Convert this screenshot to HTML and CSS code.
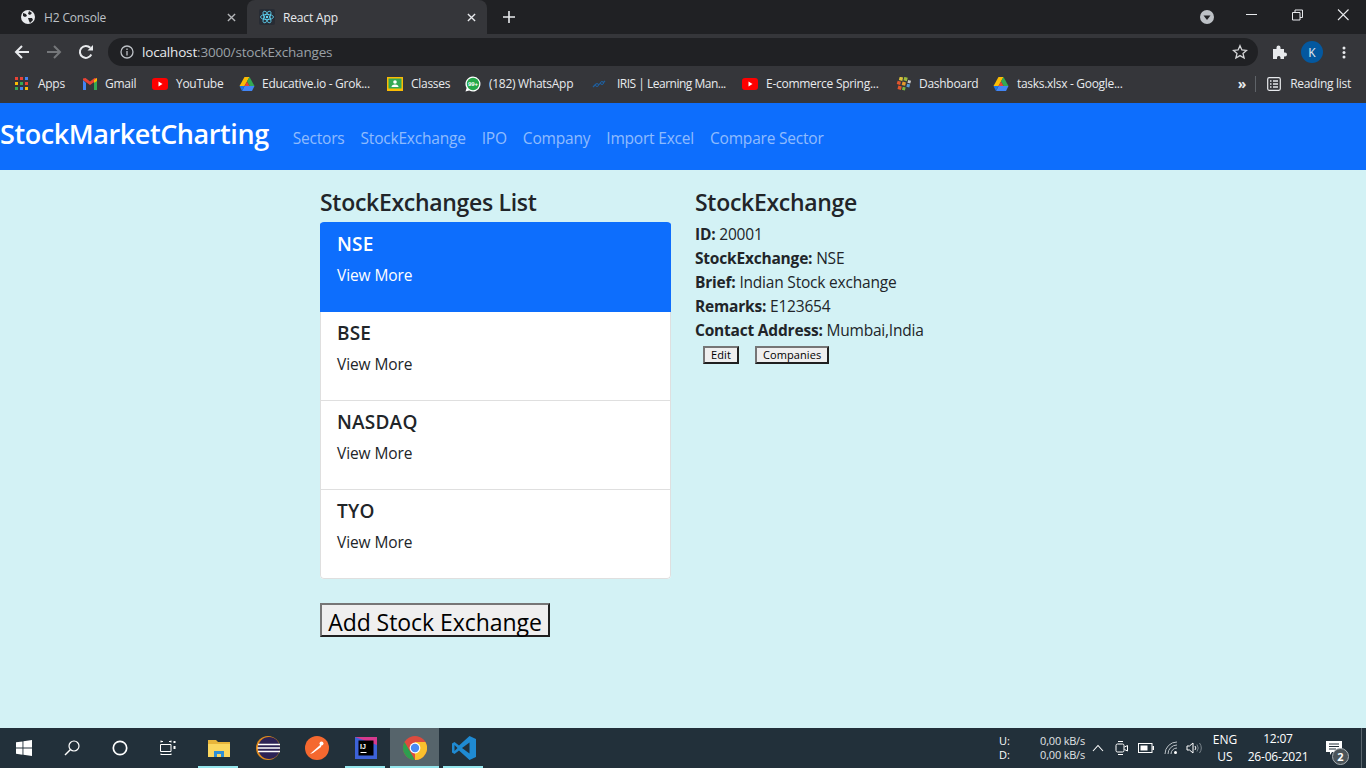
FILE: index.html
```html
<!DOCTYPE html>
<html lang="en">
<head>
<meta charset="utf-8">
<title>React App</title>
<link rel="stylesheet" href="styles.css">
</head>
<body>
<div class="screen">
  <header class="chrome">
    <div class="tabstrip">
      <div class="tab">
        <svg class="fav" viewBox="0 0 16 16"><circle cx="8" cy="8" r="7" fill="#e8eaed"/><path d="M3 4l3 1 1 2-2 1-2-1zM9 2l3 2-2 2-2-1zM8 9l4 0 1 2-3 3-1-2z" fill="#202124"/></svg>
        <span class="tab-title">H2 Console</span>
        <svg class="tab-x" viewBox="0 0 10 10"><path d="M1 1l8 8M9 1l-8 8" stroke="#b4b6b9" stroke-width="1.5"/></svg>
      </div>
      <div class="tab tab-active">
        <svg class="fav" viewBox="0 0 16 16"><rect width="16" height="16" rx="2" fill="#282c34"/><g fill="none" stroke="#61dafb" stroke-width=".8"><ellipse cx="8" cy="8" rx="6.500" ry="2.600"/><ellipse cx="8" cy="8" rx="6.500" ry="2.600" transform="rotate(60 8 8)"/><ellipse cx="8" cy="8" rx="6.500" ry="2.600" transform="rotate(120 8 8)"/></g><circle cx="8" cy="8" r="1.200" fill="#61dafb"/></svg>
        <span class="tab-title">React App</span>
        <svg class="tab-x" viewBox="0 0 10 10"><path d="M1 1l8 8M9 1l-8 8" stroke="#e8eaed" stroke-width="1.5"/></svg>
      </div>
      <svg class="newtab" viewBox="0 0 12 12"><path d="M6 0v12M0 6h12" stroke="#e8eaed" stroke-width="1.6"/></svg>
      <div class="strip-right">
        <svg class="tabsearch" viewBox="0 0 14 14"><circle cx="7" cy="7" r="7" fill="#bdc1c6"/><path d="M3.500 5.500h7L7 10z" fill="#202124"/></svg>
        <svg class="win" viewBox="0 0 46 30"><path d="M18 14.500h11" stroke="#e8eaed"/></svg>
        <svg class="win" viewBox="0 0 46 30"><path d="M18.500 12.500h7.500v7.500h-7.500zM21 12.500v-2.500h7.500v7.500h-2.500" fill="none" stroke="#e8eaed"/></svg>
        <svg class="win" viewBox="0 0 46 30"><path d="M18 9.500l10.500 10.500M28.500 9.500l-10.500 10.500" stroke="#e8eaed" stroke-width="1.100"/></svg>
      </div>
    </div>
    <div class="toolbar">
      <svg class="tool" viewBox="0 0 16 16"><path d="M15 8H2.500M8 2L2 8l6 6" fill="none" stroke="#e8eaed" stroke-width="2"/></svg>
      <svg class="tool" viewBox="0 0 16 16"><path d="M1 8h12.500M8 2l6 6-6 6" fill="none" stroke="#75777a" stroke-width="2"/></svg>
      <svg class="tool" viewBox="0 0 16 16"><path d="M13.300 10.500A6 6 0 1 1 12.300 3.800" fill="none" stroke="#e8eaed" stroke-width="2"/><path d="M9.500 6.500H15V1z" fill="#e8eaed"/></svg>
      <div class="omnibox">
        <svg class="info" viewBox="0 0 14 14"><circle cx="7" cy="7" r="6" fill="none" stroke="#bdc1c6" stroke-width="1.300"/><path d="M7 6v4.500M7 3.500v1.400" stroke="#bdc1c6" stroke-width="1.300"/></svg>
        <span class="url"><span class="url-host">localhost</span>:3000/stockExchanges</span>
        <svg class="star" viewBox="0 0 16 16"><path d="M8 1.700l1.900 4.300 4.600.4-3.500 3 1.100 4.600L8 11.600 3.900 14 5 9.400l-3.500-3 4.600-.4z" fill="none" stroke="#d5d6d8" stroke-width="1.300"/></svg>
      </div>
      <svg class="ext" viewBox="0 0 16 16"><path d="M1 5h3.500V3.500a2 2 0 0 1 4 0V5H12v3.500h1a2 2 0 0 1 0 4h-1V15H8.500v-1.500a1.800 1.800 0 0 0-3.500 0V15H1z" fill="#e8eaed"/></svg>
      <span class="avatar">K</span>
      <svg class="menu-dots" viewBox="0 0 4 13"><circle cx="2" cy="2" r="1.500" fill="#e8eaed"/><circle cx="2" cy="6.500" r="1.500" fill="#e8eaed"/><circle cx="2" cy="11" r="1.500" fill="#e8eaed"/></svg>
    </div>
    <div class="bookmarks">
      <div class="bm bm-apps">
        <svg class="bm-ic" viewBox="0 0 14 14"><rect x="0" y="0" width="3" height="3" fill="#ea4335"/><rect x="5" y="0" width="3" height="3" fill="#ea4335"/><rect x="10" y="0" width="3" height="3" fill="#4285f4"/><rect x="0" y="5" width="3" height="3" fill="#fbbc04"/><rect x="5" y="5" width="3" height="3" fill="#34a853"/><rect x="10" y="5" width="3" height="3" fill="#ea4335"/><rect x="0" y="10" width="3" height="3" fill="#34a853"/><rect x="5" y="10" width="3" height="3" fill="#4285f4"/><rect x="10" y="10" width="3" height="3" fill="#fbbc04"/></svg>
        <span>Apps</span>
      </div>
      <div class="bm bm-gmail">
        <svg class="bm-ic" viewBox="0 0 16 14"><path d="M1 3v10h3V6z" fill="#4285f4"/><path d="M15 3v10h-3V6z" fill="#34a853"/><path d="M1 3l7 5 7-5v-1.500L12.500 1 8 4.500 3.500 1 1 1.500z" fill="#ea4335"/><path d="M12 3l3-2v3l-3 2z" fill="#fbbc04"/></svg>
        <span>Gmail</span>
      </div>
      <div class="bm bm-yt1">
        <svg class="bm-ic" viewBox="0 0 16 12"><rect width="16" height="12" rx="3" fill="#f00"/><path d="M6.500 3.500v5l4-2.500z" fill="#fff"/></svg>
        <span>YouTube</span>
      </div>
      <div class="bm bm-edu">
        <svg class="bm-ic" viewBox="0 0 16 14"><path d="M5.500 0h5l-5 9H0.500z" fill="#fbbc04"/><path d="M10.500 0l5 9h-5L8 4.500z" fill="#34a853"/><path d="M3 14l2.500-5h10L13 14z" fill="#4285f4"/><path d="M0.500 9h5L3 14z" fill="#1a73e8"/><path d="M5.500 9h5L8 4.500z" fill="#ea4335"/></svg>
        <span>Educative.io - Grok...</span>
      </div>
      <div class="bm bm-cls">
        <svg class="bm-ic" viewBox="0 0 16 14"><rect width="16" height="14" fill="#fbbc04"/><rect x="1.500" y="1.500" width="13" height="10" fill="#34a853"/><circle cx="8" cy="5" r="1.800" fill="#fff"/><path d="M4.500 10a3.500 2.500 0 0 1 7 0z" fill="#fff"/></svg>
        <span>Classes</span>
      </div>
      <div class="bm bm-wa">
        <svg class="bm-ic bm-ic-wa" viewBox="0 0 16 16"><path d="M8 0.500a7.500 7.500 0 0 0-6.400 11.400L.5 15.500l3.700-1A7.500 7.500 0 1 0 8 .5z" fill="#fff"/><circle cx="8" cy="8" r="6.200" fill="#25a84a"/><text x="8" y="10" class="wa-count">99+</text></svg>
        <span>(182) WhatsApp</span>
      </div>
      <div class="bm bm-iris">
        <svg class="bm-ic" viewBox="0 0 16 12"><path d="M1 9l3-3M6 7l3-2M11 5l2-2" fill="none" stroke="#1f5f9e" stroke-width="1.300"/><circle cx="5" cy="7" r="1.500" fill="none" stroke="#1f5f9e"/><circle cx="10" cy="5" r="1.500" fill="none" stroke="#1f5f9e"/></svg>
        <span>IRIS | Learning Man...</span>
      </div>
      <div class="bm bm-yt2">
        <svg class="bm-ic" viewBox="0 0 16 12"><rect width="16" height="12" rx="3" fill="#f00"/><path d="M6.500 3.500v5l4-2.500z" fill="#fff"/></svg>
        <span>E-commerce Spring...</span>
      </div>
      <div class="bm bm-dash">
        <svg class="bm-ic" viewBox="0 0 14 14"><g transform="rotate(15 7 7)"><rect x="1" y="1" width="3.500" height="3.500" fill="#dcc23a"/><rect x="5.500" y="0" width="3.500" height="3.500" fill="#9bb93d"/><rect x="10" y="2" width="3" height="3" fill="#c9c9c9"/><rect x="0" y="5.500" width="3.500" height="3.500" fill="#e2552c"/><rect x="5" y="5" width="3.500" height="3.500" fill="#e89a2c"/><rect x="10" y="6" width="3" height="3" fill="#5b9bd5"/><rect x="2" y="10" width="3.500" height="3.500" fill="#e2552c"/><rect x="6.500" y="10" width="3" height="3" fill="#7cb342"/></g></svg>
        <span>Dashboard</span>
      </div>
      <div class="bm bm-xls">
        <svg class="bm-ic" viewBox="0 0 16 14"><path d="M5.500 0h5l-5 9H0.500z" fill="#fbbc04"/><path d="M10.500 0l5 9h-5L8 4.500z" fill="#34a853"/><path d="M3 14l2.500-5h10L13 14z" fill="#4285f4"/><path d="M0.500 9h5L3 14z" fill="#1a73e8"/><path d="M5.500 9h5L8 4.500z" fill="#ea4335"/></svg>
        <span>tasks.xlsx - Google...</span>
      </div>
      <div class="bm-right">
        <span class="chev">»</span>
        <span class="bm-sep"></span>
        <svg class="rl-ic" viewBox="0 0 14 14"><rect x=".7" y=".7" width="12.600" height="12.600" rx="1.500" fill="none" stroke="#e8eaed" stroke-width="1.200"/><path d="M3 4h1.500M6 4h5M3 7h1.500M6 7h5M3 10h1.500M6 10h5" stroke="#e8eaed" stroke-width="1.300"/></svg>
        <span class="rl-text">Reading list</span>
      </div>
    </div>
  </header>

  <nav class="navbar">
    <a class="brand">StockMarketCharting</a>
    <div class="navlinks">
      <a class="navlink">Sectors</a>
      <a class="navlink">StockExchange</a>
      <a class="navlink">IPO</a>
      <a class="navlink">Company</a>
      <a class="navlink">Import Excel</a>
      <a class="navlink">Compare Sector</a>
    </div>
  </nav>

  <main class="page">
    <section class="col-list">
      <h4 class="heading">StockExchanges List</h4>
      <ul class="list">
        <li class="item item-active"><h5 class="item-title">NSE</h5><p class="item-more">View More</p></li>
        <li class="item"><h5 class="item-title">BSE</h5><p class="item-more">View More</p></li>
        <li class="item"><h5 class="item-title">NASDAQ</h5><p class="item-more">View More</p></li>
        <li class="item"><h5 class="item-title">TYO</h5><p class="item-more">View More</p></li>
      </ul>
      <button class="btn-add">Add Stock Exchange</button>
    </section>
    <section class="col-detail">
      <h4 class="heading">StockExchange</h4>
      <div class="field"><b>ID:</b> 20001</div>
      <div class="field"><b>StockExchange:</b> NSE</div>
      <div class="field"><b>Brief:</b> Indian Stock exchange</div>
      <div class="field"><b>Remarks:</b> E123654</div>
      <div class="field"><b>Contact Address:</b> Mumbai,India</div>
      <div class="actions">
        <button class="btn-small">Edit</button>
        <button class="btn-small">Companies</button>
      </div>
    </section>
  </main>

  <footer class="taskbar">
    <svg class="t-start" viewBox="0 0 16 16"><path d="M0 2.300l6.500-.9v6.200H0zM7.400 1.300L16 0v7.600H7.400zM0 8.500h6.500v6.200L0 13.800zM7.400 8.500H16V16l-8.600-1.200z" fill="#fff"/></svg>
    <svg class="t-search" viewBox="0 0 16 16"><circle cx="10" cy="6" r="5" fill="none" stroke="#fff" stroke-width="1.200"/><path d="M6.500 9.500L1 15" stroke="#fff" stroke-width="1.400"/></svg>
    <svg class="t-cortana" viewBox="0 0 16 16"><circle cx="8" cy="8" r="6.700" fill="none" stroke="#fff" stroke-width="1.700"/></svg>
    <svg class="t-view" viewBox="0 0 16 16"><path d="M1 1.500h2M9 1.500h2M1 .5v2M11 .5v2M.5 4.500h10.500v7H.5zM1 14.500h10M1 13.500v1.500M11 13.500v1.500" fill="none" stroke="#fff"/><path d="M13.500 1h2v2h-2zM13.500 6h2v3h-2z" fill="#fff"/></svg>
    <div class="t-app t-on">
      <svg class="t-ic t-ic-folder" viewBox="0 0 22 18"><path d="M0 1h8l2 2h12v15H0z" fill="#e8b53a"/><path d="M0 5h22v13H0z" fill="#fbd75f"/><path d="M6 18v-6h10v6h-3v-3H9v3z" fill="#2f8fd6"/></svg>
    </div>
    <div class="t-app">
      <svg class="t-ic" viewBox="0 0 24 24"><circle cx="12" cy="12" r="12" fill="#e08a1e"/><circle cx="13" cy="12" r="11" fill="#2c2255"/><path d="M2 8.500h22M1.500 12h23M2 15.500h22" stroke="#fff" stroke-width="1.300"/></svg>
    </div>
    <div class="t-app">
      <svg class="t-ic" viewBox="0 0 24 24"><circle cx="12" cy="12" r="12" fill="#f5682f"/><path d="M5 18l9-8 3-3-1 4-8 6z" fill="#fff"/><circle cx="16.500" cy="7.500" r="2" fill="#fff"/></svg>
    </div>
    <div class="t-app t-on">
      <svg class="t-ic t-ic-ij" viewBox="0 0 22 22"><rect width="22" height="22" fill="#3d62d8"/><path d="M0 0h22v8z" fill="#d63a8e"/><rect x="3.500" y="3.500" width="15" height="15" fill="#000"/><text x="5" y="11.500" class="t-ij">IJ</text><path d="M5.500 15.500h6" stroke="#fff"/></svg>
    </div>
    <div class="t-app t-on t-active">
      <svg class="t-ic" viewBox="0 0 24 24"><circle cx="12" cy="12" r="12" fill="#dd4b3e"/><path d="M12 24a12 12 0 0 0 10.400-18L12 6z" fill="#fbc02d"/><path d="M1.600 6l5.200 9L12 24a12 12 0 0 1-10.400-18z" fill="#2e9e4f"/><circle cx="12" cy="12" r="5.400" fill="#fff"/><circle cx="12" cy="12" r="4.200" fill="#4a8af4"/></svg>
    </div>
    <div class="t-app t-on">
      <svg class="t-ic" viewBox="0 0 24 24"><path d="M17.500 0L24 3v18l-6.500 3L7 14.500 2.500 18 0 16.500V7.500L2.500 6 7 9.500z" fill="#1f8ad2"/><path d="M17.500 6.500L10 12l7.500 5.500z" fill="#22303a"/><path d="M2.500 9v6l3-3z" fill="#22303a"/></svg>
    </div>
    <div class="tray">
      <div class="net-labels"><span>U:</span><span>D:</span></div>
      <div class="net-vals"><span>0,00 kB/s</span><span>0,00 kB/s</span></div>
      <svg class="tray-chev" viewBox="0 0 12 8"><path d="M1 7l5-5.500L11 7" fill="none" stroke="#fff" stroke-width="1.100"/></svg>
      <svg class="tray-meet" viewBox="0 0 14 16"><rect x="1" y="4" width="8" height="8" rx="1.500" fill="none" stroke="#fff"/><path d="M9.500 7l3-1.500v5.500l-3-1.500M3 1.500h5M3 14.500h5" fill="none" stroke="#fff"/></svg>
      <svg class="tray-bat" viewBox="0 0 16 10"><rect x=".5" y=".5" width="13.500" height="9" fill="none" stroke="#fff"/><rect x="2.500" y="2.500" width="7" height="5" fill="#fff"/><rect x="14.500" y="3" width="1.500" height="4" fill="#fff"/></svg>
      <svg class="tray-wifi" viewBox="0 0 14 14"><path d="M1 13A12 12 0 0 1 13 1M4 13a9 9 0 0 1 9-9M7 13a6 6 0 0 1 6-6" fill="none" stroke="#bcc3c8" stroke-width="1"/><circle cx="11.500" cy="11.500" r="1.500" fill="#fff"/></svg>
      <svg class="tray-vol" viewBox="0 0 17 14"><path d="M1 5h2.500L7 2v10L3.500 9H1z" fill="none" stroke="#fff"/><path d="M9 5a3 3 0 0 1 0 4" fill="none" stroke="#fff"/><path d="M11 3.500a6 6 0 0 1 0 7M13.500 2a8.500 8.500 0 0 1 0 10" fill="none" stroke="#7d878e"/></svg>
      <div class="lang"><span>ENG</span><span>US</span></div>
      <div class="clock"><span>12:07</span><span>26-06-2021</span></div>
      <div class="notif">
        <svg class="notif-ic" viewBox="0 0 16 15"><path d="M0 0h16v11H6l-2 3v-3H0z" fill="#fff"/><path d="M3 3h10M3 5.500h10M3 8h7" stroke="#22303a"/></svg>
        <span class="notif-badge">2</span>
      </div>
      <span class="desk-sep"></span>
    </div>
  </footer>
</div>
</body>
</html>
```

FILE: styles.css
```css
* { box-sizing: border-box; }
html, body { margin: 0; padding: 0; }
body { font-family: "Open Sans", "Noto Sans", "Liberation Sans", sans-serif; color: #212529; }
.screen { width: 1366px; height: 768px; display: flex; flex-direction: column; overflow: hidden; background: #d3f2f5; }

.chrome { height: 103px; flex: none; background: #35363a; color: #e8eaed; }
.tabstrip { height: 34px; background: #202124; display: flex; align-items: stretch; padding-left: 8px; }
.tab { width: 239px; height: 34px; display: flex; align-items: center; padding-left: 13px; font-size: 12px; color: #bdc1c6; }
.tab-active { background: #35363a; border-radius: 8px 8px 0 0; color: #e8eaed; padding-left: 12px; width: 240px; }
.fav { width: 16px; height: 16px; flex: none; margin-right: 8px; }
.tab .fav:first-child { margin-left: -1px; }
.tab-active .fav:first-child { margin-left: 0; }
.tab-title { flex: 1; letter-spacing: -.15px; }
.tab-x { width: 9px; height: 9px; margin-right: 11px; flex: none; }
.newtab { width: 12px; height: 12px; align-self: center; margin-left: 16px; }
.strip-right { margin-left: auto; display: flex; align-items: flex-start; }
.tabsearch { width: 14px; height: 14px; margin: 10px 14px 0 0; }
.win { width: 46px; height: 30px; }

.toolbar { height: 36px; display: flex; align-items: center; padding-left: 14px; }
.tool { width: 16px; height: 16px; margin-right: 16px; flex: none; }
.omnibox { width: 1150px; height: 28px; margin-left: -2px; border-radius: 14px; background: #202124; display: flex; align-items: center; padding: 0 10px 0 12px; }
.info { width: 14px; height: 14px; margin-right: 8px; flex: none; }
.url { font-size: 13.500px; color: #9aa0a6; flex: 1; letter-spacing: -.17px; }
.url-host { color: #e8eaed; }
.star { width: 16px; height: 16px; flex: none; }
.ext { width: 16px; height: 16px; margin-left: 14px; flex: none; }
.avatar { width: 22px; height: 22px; margin-left: 13px; border-radius: 50%; background: #04589f; color: #e8eaed; font-size: 12px; display: flex; align-items: center; justify-content: center; flex: none; }
.menu-dots { width: 4px; height: 13px; margin-left: 19px; flex: none; }

.bookmarks { height: 33px; display: flex; align-items: center; font-size: 12px; color: #e8eaed; padding: 0 0 6px 15px; letter-spacing: -.28px; }
.bm { display: flex; align-items: center; flex: none; white-space: nowrap; }
.bm-ic { width: 16px; height: 14px; margin-right: 8px; flex: none; }
.bm-apps { width: 67px; }
.bm-apps .bm-ic { width: 14px; margin-right: 9px; }
.bm-gmail { width: 70px; }
.bm-gmail .bm-ic { margin-right: 7px; }
.bm-yt1 { width: 87px; }
.bm-edu { width: 148px; }
.bm-edu .bm-ic { margin-right: 7px; }
.bm-cls { width: 78px; }
.bm-wa { width: 127px; }
.bm-ic-wa { height: 16px; }
.wa-count { font-family: "Liberation Sans", sans-serif; font-size: 6px; font-weight: 700; fill: #fff; text-anchor: middle; letter-spacing: 0; }
.bm-iris { width: 150px; letter-spacing: -.5px; }
.bm-iris .bm-ic { margin-right: 9px; }
.bm-yt2 { width: 154px; }
.bm-dash { width: 97px; }
.bm-dash .bm-ic { margin-right: 7px; }
.bm-xls { letter-spacing: -.3px; }
.bm-right { margin-left: auto; display: flex; align-items: center; padding-right: 15px; letter-spacing: -.28px; }
.chev { font-size: 14px; font-weight: 700; margin-right: 9px; }
.bm-sep { width: 1px; height: 16px; background: #5f6368; margin-right: 11px; }
.rl-ic { width: 14px; height: 14px; margin-right: 9px; }

.navbar { height: 67px; flex: none; background: #0d6efd; display: flex; align-items: center; }
.brand { color: #fff; font-size: 27px; font-weight: 600; letter-spacing: -.42px; margin-right: 24px; padding-bottom: 6px; }
.navlinks { display: flex; gap: 16px; padding-top: 2px; }
.navlink { color: rgba(255,255,255,.55); font-size: 15.500px; letter-spacing: -.2px; }

.page { flex: 1; display: flex; padding: 18px 0 0 320px; gap: 24px; }
.col-list { width: 351px; flex: none; }
.col-detail { flex: 1; }
.heading { margin: 0 0 6px; font-size: 23px; line-height: 28px; font-weight: 600; letter-spacing: -.3px; color: #212529; }
.list { list-style: none; margin: 0; padding: 0; background: #fff; border-radius: 4px; overflow: hidden; }
.item { height: 89px; padding: 8px 16px 0; border: 1px solid #dfdfdf; border-top: 0; }
.item:first-child { height: 90px; padding-top: 9px; border-color: #0d6efd; }
.item:last-child { border-radius: 0 0 4px 4px; }
.item-active { background: #0d6efd; color: #fff; }
.item-title { margin: 0; font-size: 19px; line-height: 26px; font-weight: 600; letter-spacing: .2px; }
.item-more { margin: 6px 0 0; font-size: 15.500px; line-height: 24px; letter-spacing: -.1px; }
.btn-add { display: block; margin-top: 24px; width: 230px; height: 34px; padding: 3px 0 0; background: #efefef; color: #000; border: 2px solid; border-color: #767676 #202020 #202020 #767676; font-family: inherit; font-size: 23px; line-height: 28px; letter-spacing: -.05px; }

.field { font-size: 15.500px; line-height: 24px; letter-spacing: -.2px; }
.field b { font-weight: 700; }
.actions { display: flex; gap: 16px; padding: 4px 0 0 8px; }
.btn-small { height: 18px; padding: 0 6px; background: #efefef; color: #000; border: 2px solid; border-color: #767676 #202020 #202020 #767676; font-family: inherit; font-size: 11px; line-height: 14px; letter-spacing: .1px; }

.taskbar { height: 40px; flex: none; background: #22303a; display: flex; align-items: center; color: #fff; }
.t-start { width: 16px; height: 16px; margin-left: 16px; flex: none; }
.t-search { width: 16px; height: 16px; margin-left: 32px; flex: none; }
.t-cortana { width: 16px; height: 16px; margin-left: 32px; flex: none; }
.t-view { width: 16px; height: 16px; margin-left: 32px; flex: none; }
.t-app { width: 49px; height: 40px; display: flex; align-items: center; justify-content: center; flex: none; position: relative; }
.t-on::after { content: ""; position: absolute; left: 4px; right: 5px; bottom: 0; height: 2px; background: #95e6ed; }
.t-active { background: #56646b; }
.t-active::after { left: 0; right: 0; }
.t-ic { width: 24px; height: 24px; }
.t-ic-folder { width: 22px; height: 18px; }
.t-ic-ij { width: 22px; height: 22px; }
.t-view + .t-app { margin-left: 18px; }
.t-ij { font-family: "Liberation Sans", sans-serif; font-size: 7px; font-weight: 700; fill: #fff; }
.tray { margin-left: auto; display: flex; align-items: center; height: 40px; font-size: 11px; }
.net-labels, .net-vals, .lang, .clock { display: flex; flex-direction: column; line-height: 14px; }
.net-labels { width: 39px; }
.net-vals { width: 47px; text-align: right; color: #e0e4e6; letter-spacing: -.2px; }
.tray-chev { width: 12px; height: 8px; margin-left: 7px; }
.tray-meet { width: 14px; height: 16px; margin-left: 11px; }
.tray-bat { width: 16px; height: 10px; margin-left: 9px; }
.tray-wifi { width: 14px; height: 14px; margin-left: 10px; }
.tray-vol { width: 17px; height: 14px; margin-left: 8px; }
.lang { width: 28px; margin-left: 8px; font-size: 12px; line-height: 17px; text-align: center; }
.clock { width: 70px; margin-left: 4px; text-align: center; font-size: 12px; line-height: 18px; letter-spacing: -.2px; }
.notif { width: 30px; height: 30px; margin-left: 12px; position: relative; }
.notif-ic { width: 16px; height: 15px; position: absolute; left: 1px; top: 8px; }
.notif-badge { position: absolute; left: 7px; top: 15px; width: 17px; height: 17px; border-radius: 50%; background: #4b5459; border: 1px solid #aab0b5; font-size: 11px; font-weight: 700; line-height: 15px; text-align: center; }
.desk-sep { width: 1px; height: 40px; background: #5a666e; margin: 0 4px 0 6px; }
```
